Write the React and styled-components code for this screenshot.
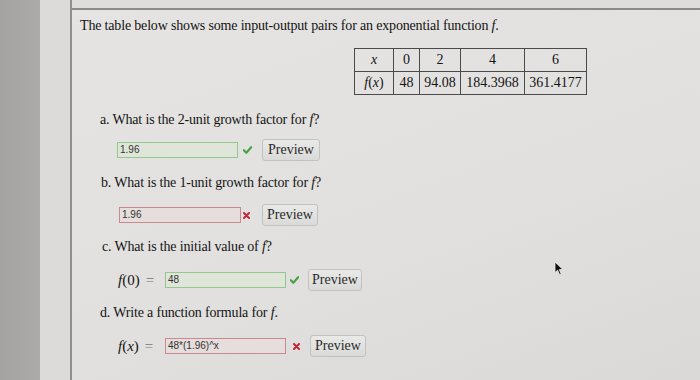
import React from "react";
import styled, { createGlobalStyle } from "styled-components";

const Global = createGlobalStyle`
  html, body { margin: 0; padding: 0; }
  body { background: #e2e1df; width: 700px; height: 380px; overflow: hidden; }
`;

const Page = styled.div`
  display: flex;
  width: 700px;
  height: 380px;
  position: relative;
  font-family: "Liberation Serif", "Times New Roman", serif;
  color: #141414;
`;

const SideDark = styled.div`
  width: 40px;
  background: linear-gradient(90deg, #a4a3a1, #acaba9);
`;

const SideLight = styled.div`
  width: 30px;
  background: #dcdbd9;
  border-right: 2px solid #8f8f8d;
`;

const Main = styled.div`
  flex: 1;
  display: flex;
  flex-direction: column;
  background: linear-gradient(160deg, #e5e4e2 0%, #e1e0de 60%, #dad9d7 100%);
`;

const TopStrip = styled.div`
  height: 8px;
  background: #dedddb;
  border-bottom: 2px solid #8a8a88;
`;

const Content = styled.div`
  padding: 7px 0 0 8px;
  display: flex;
  flex-direction: column;
  align-items: flex-start;
`;

const Text = styled.div`
  font-size: 14px;
  line-height: 18px;
  letter-spacing: -0.17px;
  margin-left: ${(p) => p.$ml || 0}px;
  margin-top: ${(p) => p.$mt ?? 12}px;
  white-space: nowrap;
`;

const I = styled.i`
  font-style: italic;
`;

const Table = styled.table`
  border-collapse: collapse;
  table-layout: fixed;
  margin-left: 274px;
  margin-top: 13px;
  font-size: 14px;
`;

const Td = styled.td`
  border: 1px solid #4a4a4a;
  height: 22px;
  padding: 0;
  text-align: center;
  width: ${(p) => p.$w}px;
  line-height: 22px;
  white-space: nowrap;
`;

const Row = styled.div`
  display: flex;
  align-items: center;
  height: 22px;
  margin-left: ${(p) => p.$ml}px;
  margin-top: ${(p) => p.$mt ?? 12}px;
`;

const MathLabel = styled.span`
  font-size: 15px;
  width: ${(p) => p.$w}px;
  white-space: nowrap;
`;

const Eq = styled.span`
  color: #777;
  margin-left: 6px;
`;

const Input = styled.div`
  box-sizing: border-box;
  width: ${(p) => p.$w}px;
  height: 16px;
  border: 1px solid ${(p) => (p.$ok ? "#93c98f" : "#c98a8e")};
  background: ${(p) => (p.$ok ? "#dfe5d9" : "#e6dedc")};
  font-family: "Liberation Sans", Arial, sans-serif;
  font-size: 10px;
  line-height: 14px;
  padding-left: 2px;
  color: #333;
`;

const Mark = styled.span`
  box-sizing: border-box;
  width: ${(p) => p.$w}px;
  padding-left: ${(p) => p.$pl}px;
  display: flex;
  align-items: center;
`;

const Button = styled.div`
  box-sizing: border-box;
  height: 22px;
  width: ${(p) => p.$w}px;
  display: flex;
  align-items: center;
  justify-content: center;
  border: 1px solid #c2c2c0;
  border-radius: 3px;
  background: linear-gradient(#e9e9e8, #dadad8);
  font-size: 14px;
  color: #2a2a2a;
`;

const Cursor = styled.svg`
  position: absolute;
  left: 554px;
  top: 261px;
`;

const Check = () => (
  <svg width="9" height="8" viewBox="0 0 9 8">
    <path d="M0.8 4.2 L3.3 6.8 L8.2 1.2" fill="none" stroke="#4aa043" strokeWidth="2.2" strokeLinecap="round" strokeLinejoin="round" />
  </svg>
);

const Cross = () => (
  <svg width="7" height="7" viewBox="0 0 7 7">
    <path d="M1 1 L6 6 M6 1 L1 6" stroke="#c0283a" strokeWidth="2" strokeLinecap="round" />
  </svg>
);

export default function App() {
  return (
    <>
      <Global />
      <Page>
        <SideDark />
        <SideLight />
        <Main>
          <TopStrip />
          <Content>
            <Text $mt={0}>
              The table below shows some input-output pairs for an exponential function <I>f</I>.
            </Text>
            <Table>
              <tbody>
                <tr>
                  <Td $w={38}><I>x</I></Td>
                  <Td $w={25}>0</Td>
                  <Td $w={40}>2</Td>
                  <Td $w={63}>4</Td>
                  <Td $w={61}>6</Td>
                </tr>
                <tr>
                  <Td $w={38}><I>f</I>(<I>x</I>)</Td>
                  <Td $w={25}>48</Td>
                  <Td $w={40}>94.08</Td>
                  <Td $w={63}>184.3968</Td>
                  <Td $w={61}>361.4177</Td>
                </tr>
              </tbody>
            </Table>

            <Text $ml={20} $mt={16}>a. What is the 2-unit growth factor for <I>f</I>?</Text>
            <Row $ml={37} $mt={10}>
              <Input $ok $w={121}>1.96</Input>
              <Mark $w={24} $pl={5}><Check /></Mark>
              <Button $w={58}>Preview</Button>
            </Row>

            <Text $ml={21} $mt={13}>b. What is the 1-unit growth factor for <I>f</I>?</Text>
            <Row $ml={39}>
              <Input $w={122}>1.96</Input>
              <Mark $w={21} $pl={2}><Cross /></Mark>
              <Button $w={56}>Preview</Button>
            </Row>

            <Text $ml={22}>c. What is the initial value of <I>f</I>?</Text>
            <Row $ml={38} $mt={13}>
              <MathLabel $w={47}><I>f</I>(0)<Eq>=</Eq></MathLabel>
              <Input $ok $w={121}>48</Input>
              <Mark $w={22} $pl={4}><Check /></Mark>
              <Button $w={54}>Preview</Button>
            </Row>

            <Text $ml={20} $mt={13}>d. Write a function formula for <I>f</I>.</Text>
            <Row $ml={38} $mt={13}>
              <MathLabel $w={47}><I>f</I>(<I>x</I>)<Eq>=</Eq></MathLabel>
              <Input $w={121}>48*(1.96)^x</Input>
              <Mark $w={24} $pl={7}><Cross /></Mark>
              <Button $w={56}>Preview</Button>
            </Row>
          </Content>
        </Main>
        <Cursor width="11" height="15" viewBox="0 0 11 15">
          <path d="M1 1 L1 11.5 L3.6 9.2 L5.6 13.6 L7.2 12.9 L5.3 8.6 L8.8 8.4 Z" fill="#111" stroke="#eee" strokeWidth="0.8" />
        </Cursor>
      </Page>
    </>
  );
}
